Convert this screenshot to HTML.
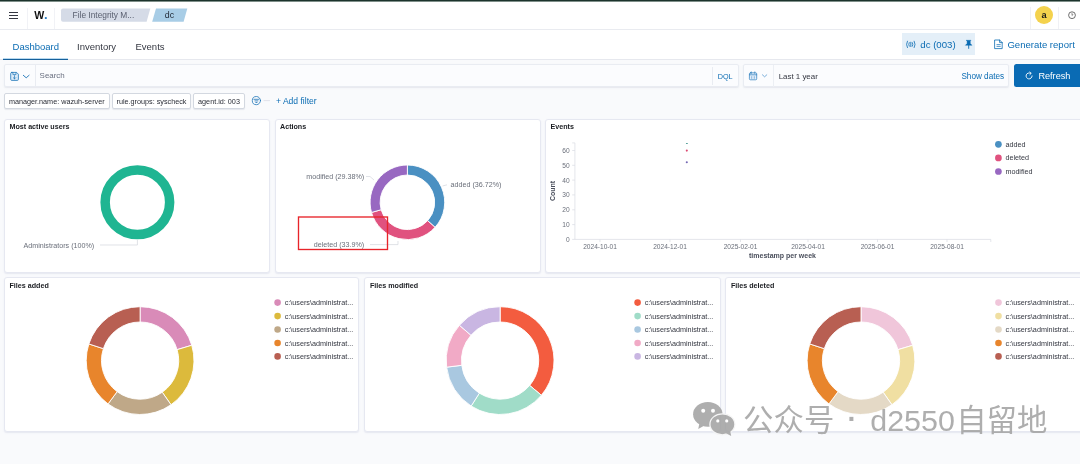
<!DOCTYPE html>
<html lang="en">
<head>
<meta charset="utf-8">
<title>File Integrity Monitoring - dc</title>
<style>
*{box-sizing:border-box;margin:0;padding:0}
html,body{width:1080px;height:464px;overflow:hidden}
body{position:relative;background:#f9fafc;font-family:"Liberation Sans","Noto Sans CJK SC",sans-serif;color:#343741;font-size:10px}
.abs{position:absolute}
.topstrip{left:0;top:0;width:1080px;height:2px;background:linear-gradient(#1c332c 0,#1c332c 50%,#7f8f89 50%,#7f8f89 100%)}
.header{left:0;top:2px;width:1080px;height:28px;background:#fff;border-bottom:1px solid #e9ebf0}
.vsep{width:1px;background:#eceef2}
.tabs{left:0;top:30px;width:1080px;height:30px;background:#fff;border-bottom:1px solid #e6e8ee}
.tab{top:10px;font-size:9.5px;color:#343741;white-space:nowrap;line-height:12px}
.blue{color:#0b6cb3}
.txt{white-space:nowrap;line-height:1}
.panel{background:#fff;border:1px solid #e6e8f1;border-radius:3px;box-shadow:0 1px 1.5px rgba(160,165,200,.22)}
.ptitle{font-weight:bold;font-size:7.15px;color:#1a1c21;white-space:nowrap;line-height:8px}
.pill{top:93px;height:16px;box-shadow:0 1px 1px rgba(150,160,180,.2);background:#fff;border:1px solid #d3d8e0;border-radius:2px;font-size:7.24px;line-height:15.4px;color:#2a2d36;white-space:nowrap;text-align:center}
svg{position:absolute;left:0;top:0;overflow:visible}
svg text{font-family:"Liberation Sans","Noto Sans CJK SC",sans-serif}
</style>
</head>
<body>
<div id="root" style="position:absolute;left:0;top:0;width:1080px;height:464px;will-change:transform">
<!-- top -->
<div class="abs topstrip"></div>
<div class="abs header"></div>
<div class="abs vsep" style="left:27px;top:8px;height:21px;background:#f1f2f6"></div>
<div class="abs vsep" style="left:54px;top:8px;height:21px;background:#f1f2f6"></div>
<div class="abs vsep" style="left:1030px;top:7px;height:22px;background:#f0f1f5"></div>
<div class="abs vsep" style="left:1058px;top:7px;height:22px;background:#f0f1f5"></div>
<!-- hamburger -->
<div class="abs" style="left:9px;top:12px;width:9px;height:1.4px;background:#343741"></div>
<div class="abs" style="left:9px;top:14.8px;width:9px;height:1.4px;background:#343741"></div>
<div class="abs" style="left:9px;top:17.6px;width:9px;height:1.4px;background:#343741"></div>
<!-- logo -->
<div class="abs txt" style="left:34.3px;top:10.2px;font-size:10.6px;font-weight:bold;color:#111;letter-spacing:-.2px">W<span style="color:#2b7fc4;font-size:13px;line-height:0">.</span></div>
<!-- breadcrumbs -->
<svg width="1080" height="464" viewBox="0 0 1080 464">
  <path d="M63 8.5 H150.3 L146.6 21.8 H63 Q61 21.8 61 19.8 V10.5 Q61 8.5 63 8.5Z" fill="#d5dbe7"/>
  <path d="M156 8.5 H187.3 L183.6 21.8 H152.2 Z" fill="#a8cde6"/>
</svg>
<div class="abs txt" style="left:72.6px;top:10.9px;font-size:8.35px;color:#5a6070">File Integrity M...</div>
<div class="abs txt" style="left:164.8px;top:10.7px;font-size:8.8px;color:#1f2733">dc</div>
<!-- avatar -->
<div class="abs" style="left:1035.2px;top:6px;width:18px;height:18px;border-radius:50%;background:#f4d24d"></div>
<div class="abs txt" style="left:1041.5px;top:10.9px;font-size:9.2px;font-weight:bold;color:#1a1a1a">a</div>
<svg width="1080" height="464" viewBox="0 0 1080 464">
  <circle cx="1072" cy="15.2" r="3.4" fill="none" stroke="#4a4a4a" stroke-width=".8"/>
  <path d="M1071 14.3 Q1072 13.1 1072.9 14.3 Q1072.9 15.1 1072 15.5 V16.1" fill="none" stroke="#4a4a4a" stroke-width=".6"/>
</svg>

<!-- tabs -->
<div class="abs tabs"></div>
<div class="abs tab blue" style="left:12.6px;top:40.5px">Dashboard</div>
<div class="abs tab" style="left:77px;top:40.5px">Inventory</div>
<div class="abs tab" style="left:135.5px;top:40.5px">Events</div>
<div class="abs" style="left:3px;top:58px;width:65px;height:2px;background:linear-gradient(#b9d9ef 0,#b9d9ef 50%,#16609b 50%,#16609b 100%)"></div>
<!-- agent button -->
<div class="abs" style="left:901.5px;top:33px;width:73.3px;height:22.4px;background:#e4eff8"></div>
<div class="abs txt blue" style="left:920.3px;top:39.8px;font-size:9.65px">dc (003)</div>
<div class="abs txt blue" style="left:1007.4px;top:39.8px;font-size:9.55px">Generate report</div>
<svg width="1080" height="464" viewBox="0 0 1080 464" fill="none" stroke="#0b6cb3" stroke-linecap="round" stroke-linejoin="round">
  <!-- signal icon -->
  <g stroke-width=".8">
    <path d="M910.8 42.2 V46.6"/>
    <path d="M909.2 42.6 Q908.2 44.4 909.2 46.2"/>
    <path d="M912.4 42.6 Q913.4 44.4 912.4 46.2"/>
    <path d="M907.4 41.2 Q905.6 44.4 907.4 47.6"/>
    <path d="M914.2 41.2 Q916 44.4 914.2 47.6"/>
  </g>
  <!-- pin icon -->
  <path d="M966.4 40.3 H971 L970.3 41.2 V43.6 L972 45.3 H965.4 L967.1 43.6 V41.2Z" fill="#0b6cb3" stroke-width=".4"/>
  <path d="M968.7 45.3 V48.4" stroke-width=".9"/>
  <!-- doc icon -->
  <path d="M995 40 H999.6 L1002.2 42.6 V48.6 H995Z M999.6 40 V42.6 H1002.2" stroke-width=".8"/>
  <path d="M996.9 44.6 H1000.3 M996.9 46.4 H1000.3" stroke-width=".7"/>
</svg>

<!-- search bar -->
<div class="abs" style="left:4px;top:64px;width:735px;height:23px;background:#fbfcfe;border:1px solid #e9ecf2;border-radius:2px;box-shadow:0 1px 1.5px rgba(150,160,180,.2)"></div>
<div class="abs vsep" style="left:35px;top:65px;height:22px;background:#e9ecf2"></div>
<div class="abs vsep" style="left:711.5px;top:67px;height:18px;background:#e9ecf2"></div>
<div class="abs txt" style="left:39.6px;top:72.1px;font-size:7.95px;color:#6a7080">Search</div>
<div class="abs txt blue" style="left:717.7px;top:73px;font-size:7.25px">DQL</div>
<!-- date bar -->
<div class="abs" style="left:743px;top:64px;width:266px;height:23px;background:#fbfcfe;border:1px solid #e9ecf2;border-radius:2px;box-shadow:0 1px 1.5px rgba(150,160,180,.2)"></div>
<div class="abs vsep" style="left:773px;top:65px;height:22px;background:#eceff4"></div>
<div class="abs txt" style="left:778.7px;top:72.8px;font-size:7.92px;color:#343741">Last 1 year</div>
<div class="abs txt blue" style="left:961.4px;top:73.1px;font-size:8.19px">Show dates</div>
<!-- refresh -->
<div class="abs" style="left:1014px;top:64px;width:70px;height:23.4px;background:#0a6bb4;border-radius:2.5px"></div>
<div class="abs txt" style="left:1038.4px;top:71.6px;font-size:9.15px;color:#fff">Refresh</div>
<svg width="1080" height="464" viewBox="0 0 1080 464" fill="none" stroke-linecap="round" stroke-linejoin="round">
  <!-- save icon -->
  <path d="M11.8 72.4 H16.6 L18.4 74.2 V79.3 Q18.4 80.4 17.3 80.4 H11.8 Q10.7 80.4 10.7 79.3 V73.5 Q10.7 72.4 11.8 72.4Z" fill="#dcebf8" stroke="#1d75b8" stroke-width=".8"/>
  <path d="M12.9 72.6 V74.6 H16 V72.6" stroke="#1d75b8" stroke-width=".7"/>
  <path d="M14.5 75.6 V78.8 M13.3 77.7 L14.5 78.9 L15.7 77.7" stroke="#1d75b8" stroke-width=".7"/>
  <path d="M23.3 75.3 L26.2 77.8 L29.1 75.3" stroke="#1d75b8" stroke-width=".9"/>
  <!-- calendar icon -->
  <rect x="749.4" y="72.8" width="7.3" height="7" rx="1" fill="#e3eefa" stroke="#2a7dbd" stroke-width=".7"/>
  <path d="M749.4 74.8 H756.7 M751.3 71.9 V73.4 M754.8 71.9 V73.4" stroke="#2a7dbd" stroke-width=".7"/>
  <path d="M751.7 76.6 V78.4 M754.3 76.6 V78.4" stroke="#6ea6d4" stroke-width=".8"/>
  <path d="M762.4 74.8 L764.6 76.8 L766.8 74.8" stroke="#5b9bd0" stroke-width=".8"/>
  <!-- refresh icon -->
  <path d="M1032.1 75.9 A3 3 0 1 1 1030.6 73.3" stroke="#fff" stroke-width=".9"/>
  <path d="M1029.7 72 L1031.3 73.3 L1029.8 74.7" stroke="#fff" stroke-width=".8"/>
  <!-- filter icon -->
  <circle cx="256.4" cy="100.6" r="4.1" stroke="#1d75b8" stroke-width=".8"/>
  <path d="M253.9 99.3 H258.9 M254.9 100.9 H257.9 M255.8 102.5 H257" stroke="#1d75b8" stroke-width=".8"/>
  <path d="M264 100.6 H269.6" stroke="#d5d9e2" stroke-width=".7"/>
</svg>

<!-- filter pills -->
<div class="abs pill" style="left:4px;width:105.5px">manager.name: wazuh-server</div>
<div class="abs pill" style="left:112px;width:79px">rule.groups: syscheck</div>
<div class="abs pill" style="left:193px;width:52px">agent.id: 003</div>
<div class="abs txt blue" style="left:276px;top:96.6px;font-size:8.56px">+ Add filter</div>

<!-- panels row 1 -->
<div class="abs panel" style="left:4px;top:119px;width:266px;height:154px"></div>
<div class="abs panel" style="left:275px;top:119px;width:266px;height:154px"></div>
<div class="abs panel" style="left:545px;top:119px;width:545px;height:154px"></div>
<!-- panels row 2 -->
<div class="abs panel" style="left:4px;top:277px;width:355px;height:155px"></div>
<div class="abs panel" style="left:364px;top:277px;width:357px;height:155px"></div>
<div class="abs panel" style="left:725px;top:277px;width:365px;height:155px"></div>
<div class="abs ptitle" style="left:9.5px;top:122.9px">Most active users</div>
<div class="abs ptitle" style="left:280px;top:122.9px">Actions</div>
<div class="abs ptitle" style="left:550.5px;top:122.9px">Events</div>
<div class="abs ptitle" style="left:9.5px;top:281.6px">Files added</div>
<div class="abs ptitle" style="left:370px;top:281.6px">Files modified</div>
<div class="abs ptitle" style="left:731px;top:281.6px">Files deleted</div>

<svg width="1080" height="464" viewBox="0 0 1080 464">
<!-- most active users -->
<circle cx="137.4" cy="202.3" r="32.25" fill="none" stroke="#1fb592" stroke-width="9.5"/>
<path d="M137.4 240 V245 H100" fill="none" stroke="#d3d6dd" stroke-width=".7"/>
<text x="94.2" y="247.6" text-anchor="end" font-size="7.15" fill="#6a6f7a">Administrators (100%)</text>
<!-- actions -->
<path d="M407.40 165.00 A37.3 37.3 0 0 1 435.03 227.36 L427.62 220.64 A27.3 27.3 0 0 0 407.40 175.00Z" fill="#4a90c2" stroke="#fff" stroke-width="0.9"/>
<path d="M435.03 227.36 A37.3 37.3 0 0 1 371.51 212.46 L381.13 209.73 A27.3 27.3 0 0 0 427.62 220.64Z" fill="#e0527f" stroke="#fff" stroke-width="0.9"/>
<path d="M371.51 212.46 A37.3 37.3 0 0 1 407.40 165.00 L407.40 175.00 A27.3 27.3 0 0 0 381.13 209.73Z" fill="#9868c1" stroke="#fff" stroke-width="0.9"/>
<!-- files added -->
<path d="M140.10 306.70 A53.9 53.9 0 0 1 191.78 345.29 L177.11 349.64 A38.6 38.6 0 0 0 140.10 322.00Z" fill="#d98bb8" stroke="#fff" stroke-width="0.9"/>
<path d="M191.78 345.29 A53.9 53.9 0 0 1 171.02 404.75 L162.24 392.22 A38.6 38.6 0 0 0 177.11 349.64Z" fill="#dcba3c" stroke="#fff" stroke-width="0.9"/>
<path d="M171.02 404.75 A53.9 53.9 0 0 1 108.04 403.93 L117.14 391.63 A38.6 38.6 0 0 0 162.24 392.22Z" fill="#bfa888" stroke="#fff" stroke-width="0.9"/>
<path d="M108.04 403.93 A53.9 53.9 0 0 1 88.84 343.94 L103.39 348.67 A38.6 38.6 0 0 0 117.14 391.63Z" fill="#e8852c" stroke="#fff" stroke-width="0.9"/>
<path d="M88.84 343.94 A53.9 53.9 0 0 1 140.10 306.70 L140.10 322.00 A38.6 38.6 0 0 0 103.39 348.67Z" fill="#b85f52" stroke="#fff" stroke-width="0.9"/>
<!-- files modified -->
<path d="M500.10 306.70 A53.9 53.9 0 0 1 541.39 395.25 L529.67 385.41 A38.6 38.6 0 0 0 500.10 322.00Z" fill="#f35c3f" stroke="#fff" stroke-width="0.9"/>
<path d="M541.39 395.25 A53.9 53.9 0 0 1 471.14 406.06 L479.36 393.15 A38.6 38.6 0 0 0 529.67 385.41Z" fill="#a0dcc8" stroke="#fff" stroke-width="0.9"/>
<path d="M471.14 406.06 A53.9 53.9 0 0 1 446.60 367.17 L461.79 365.30 A38.6 38.6 0 0 0 479.36 393.15Z" fill="#a9c8e0" stroke="#fff" stroke-width="0.9"/>
<path d="M446.60 367.17 A53.9 53.9 0 0 1 459.42 325.24 L470.97 335.28 A38.6 38.6 0 0 0 461.79 365.30Z" fill="#f1aac6" stroke="#fff" stroke-width="0.9"/>
<path d="M459.42 325.24 A53.9 53.9 0 0 1 500.10 306.70 L500.10 322.00 A38.6 38.6 0 0 0 470.97 335.28Z" fill="#c9b6e2" stroke="#fff" stroke-width="0.9"/>
<!-- files deleted -->
<path d="M861.00 306.70 A53.9 53.9 0 0 1 912.68 345.29 L898.01 349.64 A38.6 38.6 0 0 0 861.00 322.00Z" fill="#f0c6da" stroke="#fff" stroke-width="0.9"/>
<path d="M912.68 345.29 A53.9 53.9 0 0 1 891.92 404.75 L883.14 392.22 A38.6 38.6 0 0 0 898.01 349.64Z" fill="#f0dfa2" stroke="#fff" stroke-width="0.9"/>
<path d="M891.92 404.75 A53.9 53.9 0 0 1 828.94 403.93 L838.04 391.63 A38.6 38.6 0 0 0 883.14 392.22Z" fill="#e4d9c6" stroke="#fff" stroke-width="0.9"/>
<path d="M828.94 403.93 A53.9 53.9 0 0 1 809.74 343.94 L824.29 348.67 A38.6 38.6 0 0 0 838.04 391.63Z" fill="#e8852c" stroke="#fff" stroke-width="0.9"/>
<path d="M809.74 343.94 A53.9 53.9 0 0 1 861.00 306.70 L861.00 322.00 A38.6 38.6 0 0 0 824.29 348.67Z" fill="#b85f52" stroke="#fff" stroke-width="0.9"/>
<!-- actions labels -->
<text x="450.6" y="187.2" font-size="7.15" fill="#6a6f7a">added (36.72%)</text>
<text x="364.2" y="178.8" text-anchor="end" font-size="7.15" fill="#6a6f7a">modified (29.38%)</text>
<text x="364.2" y="247" text-anchor="end" font-size="7.15" fill="#6a6f7a">deleted (33.9%)</text>
<path d="M442.5 186 L447 184.8" fill="none" stroke="#d3d6dd" stroke-width=".7"/>
<path d="M366 176.5 H370 L374 180" fill="none" stroke="#d3d6dd" stroke-width=".7"/>
<path d="M370 244.6 H398 V241" fill="none" stroke="#d3d6dd" stroke-width=".7"/>
<rect x="298.5" y="217" width="89" height="32.5" fill="none" stroke="#e8242a" stroke-width="1.35"/>
</svg>
<!-- events chart -->
<svg width="1080" height="464" viewBox="0 0 1080 464">
<path d="M574.9 142.9 V239.4 H990.8 V242" fill="none" stroke="#d8dbe2" stroke-width=".7"/>
<path d="M572.2 239.4 H574.9" stroke="#d8dbe2" stroke-width=".7"/>
<text x="569.6" y="241.8" text-anchor="end" font-size="6.6" fill="#6a6f7a">0</text>
<path d="M572.2 224.6 H574.9" stroke="#d8dbe2" stroke-width=".7"/>
<text x="569.6" y="227.0" text-anchor="end" font-size="6.6" fill="#6a6f7a">10</text>
<path d="M572.2 209.8 H574.9" stroke="#d8dbe2" stroke-width=".7"/>
<text x="569.6" y="212.2" text-anchor="end" font-size="6.6" fill="#6a6f7a">20</text>
<path d="M572.2 194.9 H574.9" stroke="#d8dbe2" stroke-width=".7"/>
<text x="569.6" y="197.3" text-anchor="end" font-size="6.6" fill="#6a6f7a">30</text>
<path d="M572.2 180.1 H574.9" stroke="#d8dbe2" stroke-width=".7"/>
<text x="569.6" y="182.5" text-anchor="end" font-size="6.6" fill="#6a6f7a">40</text>
<path d="M572.2 165.3 H574.9" stroke="#d8dbe2" stroke-width=".7"/>
<text x="569.6" y="167.7" text-anchor="end" font-size="6.6" fill="#6a6f7a">50</text>
<path d="M572.2 150.5 H574.9" stroke="#d8dbe2" stroke-width=".7"/>
<text x="569.6" y="152.9" text-anchor="end" font-size="6.6" fill="#6a6f7a">60</text>
<path d="M572.2 142.9 H574.9" stroke="#d8dbe2" stroke-width=".7"/>
<path d="M600 239.4 V242" stroke="#d8dbe2" stroke-width=".7"/>
<text x="600" y="248.8" text-anchor="middle" font-size="6.6" fill="#6a6f7a">2024-10-01</text>
<path d="M670 239.4 V242" stroke="#d8dbe2" stroke-width=".7"/>
<text x="670" y="248.8" text-anchor="middle" font-size="6.6" fill="#6a6f7a">2024-12-01</text>
<path d="M740.5 239.4 V242" stroke="#d8dbe2" stroke-width=".7"/>
<text x="740.5" y="248.8" text-anchor="middle" font-size="6.6" fill="#6a6f7a">2025-02-01</text>
<path d="M808 239.4 V242" stroke="#d8dbe2" stroke-width=".7"/>
<text x="808" y="248.8" text-anchor="middle" font-size="6.6" fill="#6a6f7a">2025-04-01</text>
<path d="M877.5 239.4 V242" stroke="#d8dbe2" stroke-width=".7"/>
<text x="877.5" y="248.8" text-anchor="middle" font-size="6.6" fill="#6a6f7a">2025-06-01</text>
<path d="M947 239.4 V242" stroke="#d8dbe2" stroke-width=".7"/>
<text x="947" y="248.8" text-anchor="middle" font-size="6.6" fill="#6a6f7a">2025-08-01</text>
<text x="782.5" y="258.2" text-anchor="middle" font-size="7" font-weight="bold" fill="#4a4f5c">timestamp per week</text>
<text transform="translate(555.4 191) rotate(-90)" text-anchor="middle" font-size="7" font-weight="bold" fill="#4a4f5c">Count</text>
<rect x="685.9" y="143" width="2" height="1" rx=".4" fill="#4b9a94"/>
<circle cx="686.8" cy="150.6" r="1.05" fill="#dc4a72"/>
<circle cx="686.8" cy="162.3" r="1.05" fill="#7468b4"/>
<circle cx="998.4" cy="144.3" r="3.35" fill="#4a90c2"/>
<text x="1005.4" y="146.8" font-size="7.2" fill="#343741">added</text>
<circle cx="998.4" cy="157.9" r="3.35" fill="#e0527f"/>
<text x="1005.4" y="160.4" font-size="7.2" fill="#343741">deleted</text>
<circle cx="998.4" cy="171.5" r="3.35" fill="#9868c1"/>
<text x="1005.4" y="174.0" font-size="7.2" fill="#343741">modified</text>
<!-- legends -->
<circle cx="277.6" cy="302.6" r="3.3" fill="#d98bb8"/>
<text x="284.7" y="305.1" font-size="7.22" fill="#343741">c:\users\administrat...</text>
<circle cx="277.6" cy="316.1" r="3.3" fill="#dcba3c"/>
<text x="284.7" y="318.6" font-size="7.22" fill="#343741">c:\users\administrat...</text>
<circle cx="277.6" cy="329.5" r="3.3" fill="#bfa888"/>
<text x="284.7" y="332.0" font-size="7.22" fill="#343741">c:\users\administrat...</text>
<circle cx="277.6" cy="343.0" r="3.3" fill="#e8852c"/>
<text x="284.7" y="345.5" font-size="7.22" fill="#343741">c:\users\administrat...</text>
<circle cx="277.6" cy="356.4" r="3.3" fill="#b85f52"/>
<text x="284.7" y="358.9" font-size="7.22" fill="#343741">c:\users\administrat...</text>
<circle cx="637.6" cy="302.6" r="3.3" fill="#f35c3f"/>
<text x="644.7" y="305.1" font-size="7.22" fill="#343741">c:\users\administrat...</text>
<circle cx="637.6" cy="316.1" r="3.3" fill="#a0dcc8"/>
<text x="644.7" y="318.6" font-size="7.22" fill="#343741">c:\users\administrat...</text>
<circle cx="637.6" cy="329.5" r="3.3" fill="#a9c8e0"/>
<text x="644.7" y="332.0" font-size="7.22" fill="#343741">c:\users\administrat...</text>
<circle cx="637.6" cy="343.0" r="3.3" fill="#f1aac6"/>
<text x="644.7" y="345.5" font-size="7.22" fill="#343741">c:\users\administrat...</text>
<circle cx="637.6" cy="356.4" r="3.3" fill="#c9b6e2"/>
<text x="644.7" y="358.9" font-size="7.22" fill="#343741">c:\users\administrat...</text>
<circle cx="998.5" cy="302.6" r="3.3" fill="#f0c6da"/>
<text x="1005.6" y="305.1" font-size="7.22" fill="#343741">c:\users\administrat...</text>
<circle cx="998.5" cy="316.1" r="3.3" fill="#f0dfa2"/>
<text x="1005.6" y="318.6" font-size="7.22" fill="#343741">c:\users\administrat...</text>
<circle cx="998.5" cy="329.5" r="3.3" fill="#e4d9c6"/>
<text x="1005.6" y="332.0" font-size="7.22" fill="#343741">c:\users\administrat...</text>
<circle cx="998.5" cy="343.0" r="3.3" fill="#e8852c"/>
<text x="1005.6" y="345.5" font-size="7.22" fill="#343741">c:\users\administrat...</text>
<circle cx="998.5" cy="356.4" r="3.3" fill="#b85f52"/>
<text x="1005.6" y="358.9" font-size="7.22" fill="#343741">c:\users\administrat...</text>
</svg>
<!-- watermark -->
<svg width="1080" height="464" viewBox="0 0 1080 464" style="opacity:.88">
  <g fill="#a3a3a3">
    <ellipse cx="707.8" cy="414.3" rx="14.7" ry="12.4"/>
    <path d="M699.5 423 L698.2 428.9 L704.5 425.6Z"/>
  </g>
  <circle cx="703.2" cy="410.8" r="2" fill="#fff"/>
  <circle cx="713" cy="410.8" r="2" fill="#fff"/>
  <g fill="#a3a3a3">
    <ellipse cx="722.4" cy="424.3" rx="12.5" ry="10.5" stroke="#f4f4f4" stroke-width="1.3"/>
    <path d="M726 433.2 L731.2 435.9 L730.2 431Z"/>
  </g>
  <circle cx="717.8" cy="420.9" r="1.6" fill="#fff"/>
  <circle cx="726.7" cy="420.9" r="1.6" fill="#fff"/>
  <text y="430.8" font-size="30.4" fill="#a3a3a3" style="font-family:'Liberation Sans','Noto Sans CJK SC',sans-serif"><tspan x="743.1">公众号</tspan><tspan x="847.6" y="428.4" font-size="28" font-weight="bold">·</tspan><tspan x="870.3" y="430.8">d2550</tspan><tspan x="956.2">自留地</tspan></text>
</svg>

</div>
</body>
</html>
